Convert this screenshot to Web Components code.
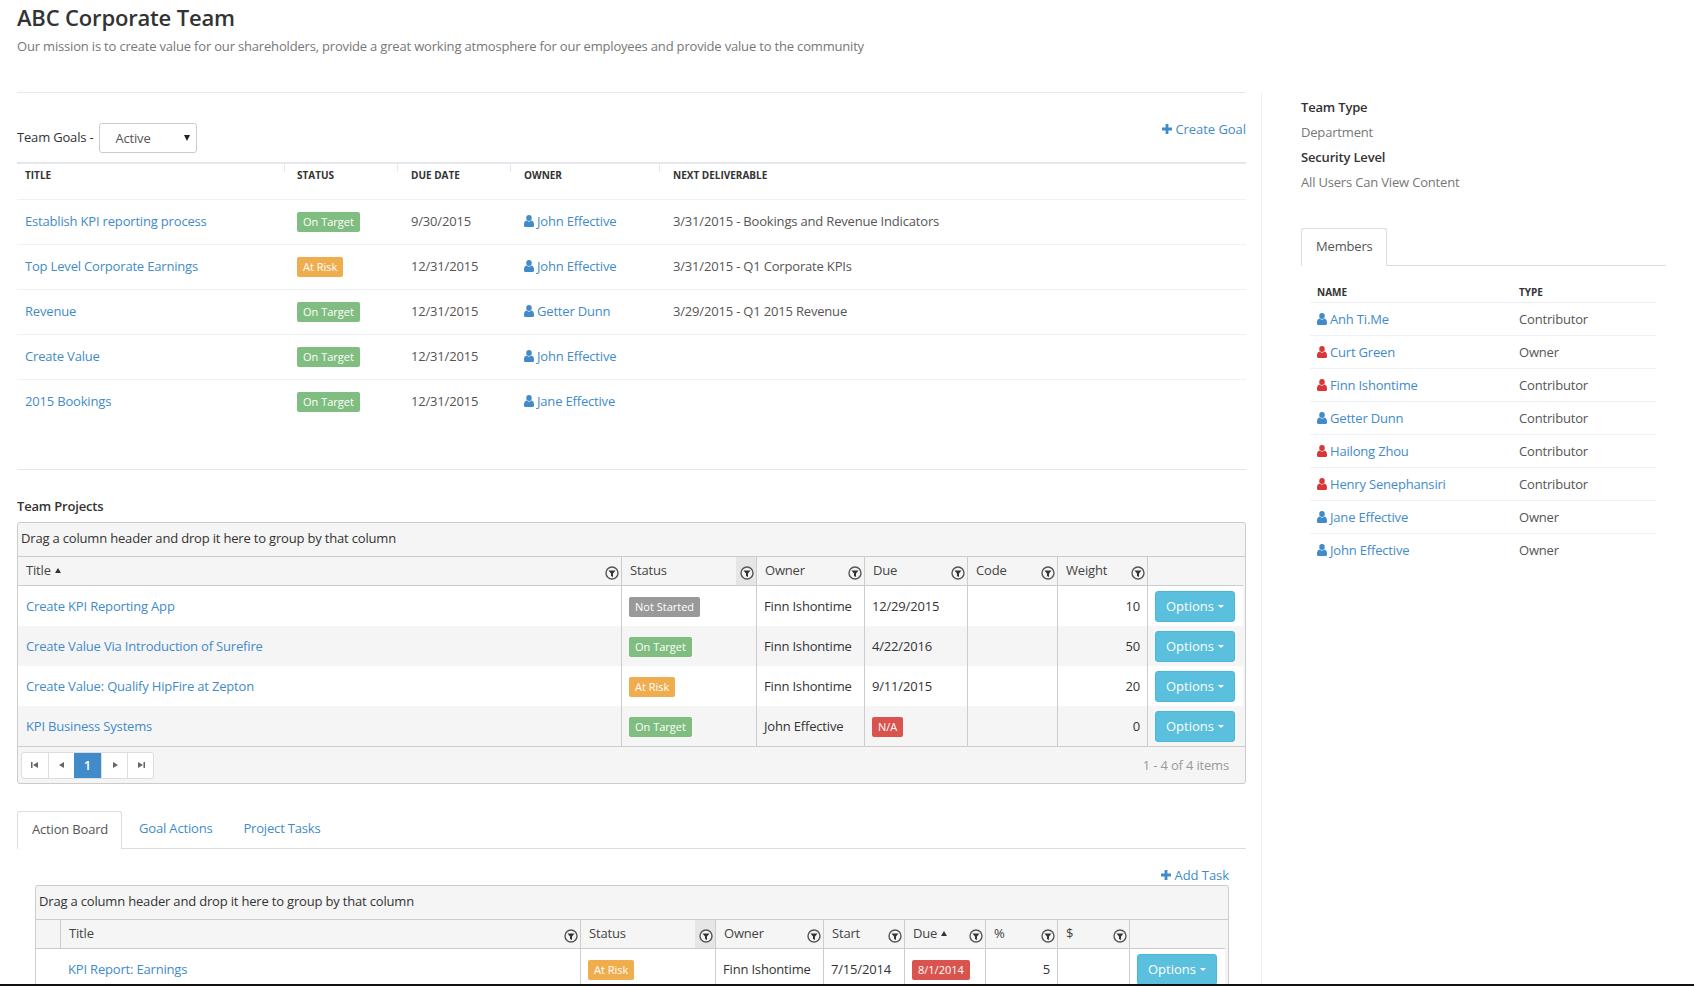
<!doctype html>
<html>
<head>
<meta charset="utf-8">
<style>
    html, body { margin: 0; padding: 0; height: 986px; overflow: hidden; background: #fff; }
    body { font: 13px/20px "Open Sans", sans-serif; color: #555; letter-spacing: -0.18px; }
</style>
</head>
<body>
<team-page></team-page>

<script>
const LINK = "#428bca"

class UserIcon extends HTMLElement
{
    connectedCallback() {
        const color = this.getAttribute("color") || LINK
        this.attachShadow({ mode: "open" }).innerHTML = `
            <style>
                :host { display: inline-block; width: 10px; height: 12px; margin-right: 3px; vertical-align: -1px }
                svg   { display: block }
            </style>
            <svg width="10" height="12" viewBox="0 0 10 12"><path fill="${color}" d="M5 0a2.7 2.7 0 0 1 2.7 2.9A2.8 2.8 0 0 1 5 6a2.8 2.8 0 0 1-2.7-3.100A2.7 2.700 0 0 1 5 0zM2.600 5.600C3.300 6.300 4.100 6.700 5 6.700s1.700-.4 2.400-1.100C9 5.900 10 7.300 10 9.500v1.300c0 .7-.5 1.200-1.200 1.200H1.200C.5 12 0 11.500 0 10.800V9.500c0-2.200 1-3.600 2.600-3.900z"/></svg>
        `
    }
}
customElements.define("user-icon", UserIcon)

class PlusIcon extends HTMLElement
{
    connectedCallback() {
        this.attachShadow({ mode: "open" }).innerHTML = `
            <style>:host { display: inline-block; width: 10px; height: 10px; margin-right: 3px } svg { display: block }</style>
            <svg width="10" height="10" viewBox="0 0 10 10"><path fill="${LINK}" d="M3.600 0h2.800v3.600H10v2.800H6.400V10H3.600V6.400H0V3.600h3.600z"/></svg>
        `
    }
}
customElements.define("plus-icon", PlusIcon)

class FilterIcon extends HTMLElement
{
    connectedCallback() {
        this.attachShadow({ mode: "open" }).innerHTML = `
            <style>:host { display: block; width: 14px; height: 14px } svg { display: block }</style>
            <svg width="14" height="14" viewBox="0 0 14 14">
                <circle cx="7" cy="7" r="6" fill="#f5f5f5" stroke="#555" stroke-width="1.400"/>
                <path fill="#333" d="M3.500 4.500h7L8 7.500V11L6 10V7.500z"/>
            </svg>
        `
    }
}
customElements.define("filter-icon", FilterIcon)

class StatusLabel extends HTMLElement
{
    connectedCallback() {
        this.attachShadow({ mode: "open" }).innerHTML = `
            <style>
                :host          { display: inline-block; height: 20px; padding: 0 6px; border-radius: 2px; box-sizing: border-box; letter-spacing: 0;
                                 font-size: 11px; line-height: 20px; color: #fff; vertical-align: middle; background: #999 }
                :host([kind=ok])   { background: #80bd80 }
                :host([kind=risk]) { background: #f0ad4e }
                :host([kind=late]) { background: #d9534f }
            </style>
            <slot></slot>
        `
    }
}
customElements.define("status-label", StatusLabel)

class OptionsButton extends HTMLElement
{
    connectedCallback() {
        this.attachShadow({ mode: "open" }).innerHTML = `
            <style>
                :host  { display: inline-flex; align-items: center; justify-content: center; width: 80px; height: 31px; box-sizing: border-box; letter-spacing: 0;
                         background: #5bc0de; border: 1px solid #46b8da; border-radius: 3px; color: #fff; vertical-align: middle }
                .caret { margin-left: 4px; border-top: 3px solid #fff; border-left: 3px solid transparent; border-right: 3px solid transparent }
            </style>
            Options <span class=caret></span>
        `
    }
}
customElements.define("options-button", OptionsButton)

class TabStrip extends HTMLElement
{
    connectedCallback() {
        const tabs = this.getAttribute("tabs").split("|")
        this.attachShadow({ mode: "open" }).innerHTML = `
            <style>
                :host  { display: flex; height: 37px; border-bottom: 1px solid #ddd; box-sizing: content-box }
                .tab   { height: 37px; padding: 0 14px 0 15px; margin-right: 2px; line-height: 35px; box-sizing: border-box; color: ${LINK} }
                .tab:first-of-type { color: #555; background: #fff; border: 1px solid #ddd; border-bottom: 0; border-radius: 3px 3px 0 0; padding: 0 13px 0 14px; height: 38px }
            </style>
            ${tabs.map(t => `<div class=tab>${t}</div>`).join("")}
        `
    }
}
customElements.define("tab-strip", TabStrip)

class GoalTable extends HTMLElement
{
    connectedCallback() {
        const rows = [
            ["Establish KPI reporting process", "ok", "On Target", "9/30/2015", "John Effective", "3/31/2015 - Bookings and Revenue Indicators"],
            ["Top Level Corporate Earnings", "risk", "At Risk", "12/31/2015", "John Effective", "3/31/2015 - Q1 Corporate KPIs"],
            ["Revenue", "ok", "On Target", "12/31/2015", "Getter Dunn", "3/29/2015 - Q1 2015 Revenue"],
            ["Create Value", "ok", "On Target", "12/31/2015", "John Effective", ""],
            ["2015 Bookings", "ok", "On Target", "12/31/2015", "Jane Effective", ""],
        ]
        this.attachShadow({ mode: "open" }).innerHTML = `
            <style>
                :host  { display: block }
                .row   { display: grid; grid-template-columns: 267px 113px 113px 149px 1fr; height: 45px; align-items: center; border-top: 1px solid #eef1f5; box-sizing: border-box; padding-bottom: 2px }
                .head  { height: 37px; border-top: 2px solid #e4e8ec; align-items: start; font-size: 10px; font-weight: 700; color: #333; line-height: 22px; letter-spacing: 0; padding: 0 }
                .head > div { padding: 0 0 0 13px; height: 8px; border-left: 1px solid #e4e8ec }
                .head > div:first-child { border-left: 0; padding-left: 8px }
                .head > div:nth-child(2) { padding-left: 12px }
                .cell  { padding-left: 14px }
                .cell:first-child { padding-left: 8px }
                .cell:nth-child(2) { padding-left: 13px }
                a      { color: ${LINK} }
            </style>
            <div class="row head">
                <div>TITLE</div><div>STATUS</div><div>DUE DATE</div><div>OWNER</div><div>NEXT DELIVERABLE</div>
            </div>
            ${rows.map(r => `
                <div class=row>
                    <div class=cell><a>${r[0]}</a></div>
                    <div class=cell><status-label kind=${r[1]}>${r[2]}</status-label></div>
                    <div class=cell>${r[3]}</div>
                    <div class=cell><a><user-icon></user-icon>${r[4]}</a></div>
                    <div class=cell>${r[5]}</div>
                </div>`).join("")}
        `
    }
}
customElements.define("goal-table", GoalTable)

// columns: [label, width, {sorted, active, filter}]
class DataGrid extends HTMLElement
{
    set config(cfg) { this._cfg = cfg; this.render() }

    render() {
        const { cols, rows, footer } = this._cfg
        const shadow = this.shadowRoot || this.attachShadow({ mode: "open" })
        shadow.innerHTML = `
            <style>
                :host      { display: block; background: #f5f5f5; border: 1px solid #ccc; border-radius: 3px; color: #333; box-sizing: border-box }
                .group     { height: 33px; line-height: 31px; padding-left: 3px; border-bottom: 1px solid #ccc }
                table      { border-collapse: separate; border-spacing: 0; table-layout: fixed; background: #fff }
                th         { height: 29px; padding: 0; box-sizing: border-box; background: #f5f5f5; font-weight: 400; text-align: left; position: relative;
                             border-bottom: 1px solid #ccc; border-left: 1px solid #ccc; padding-left: 8px; line-height: 27px; vertical-align: top; color: #444 }
                th:first-child, td:first-child { border-left: 0 }
                td         { height: 40px; padding: 0 7px; box-sizing: border-box; border-left: 1px solid #ccc; white-space: nowrap }
                td:first-child { padding-left: 8px }
                td.bare    { border-left: 0; padding-left: 8px }
                tr:nth-child(even) td { background: #f5f5f5 }
                td.num     { text-align: right }
                .flt       { position: absolute; right: 2px; top: 9px }
                .flt.on    { right: 0; top: 0; bottom: 0; width: 20px; background: #e6e6e6 }
                .flt.on filter-icon { margin: 9px 0 0 4px }
                .arrow     { display: inline-block; margin-left: 4px; vertical-align: 2px; border-bottom: 5px solid #333; border-left: 3px solid transparent; border-right: 3px solid transparent }
                a          { color: ${LINK} }
                .foot      { display: flex; align-items: center; justify-content: space-between; height: 37px; border-top: 1px solid #ccc; padding: 0 16px 0 3px; box-sizing: border-box }
                .pager     { display: flex; height: 27px; border: 1px solid #ddd; border-radius: 3px; background: #fff; box-sizing: border-box }
                .pager div { width: 26px; display: flex; align-items: center; justify-content: center; border-left: 1px solid #ddd; box-sizing: border-box; font-weight: 600 }
                .pager div:first-child { border-left: 0 }
                .pager .cur { background: #428bca; color: #fff; border: 0; width: 27px }
                .pager svg { display: block }
                .items     { color: #999 }
            </style>
            <div class=group>Drag a column header and drop it here to group by that column</div>
            <table style="width:${cols.reduce((s, c) => s + c.w, 0)}px">
                <colgroup>${cols.map(c => `<col style="width:${c.w}px">`).join("")}</colgroup>
                <thead><tr>${cols.map(c => `<th>${c.label || ""}${c.sorted ? "<span class=arrow></span>" : ""}${c.filter === false ? "" : `<span class="flt ${c.active ? "on" : ""}"><filter-icon></filter-icon></span>`}</th>`).join("")}</tr></thead>
                <tbody>${rows.map(r => `<tr>${r.map((v, i) => `<td class="${cols[i].num ? "num" : ""} ${cols[i].bare ? "bare" : ""}">${v}</td>`).join("")}</tr>`).join("")}</tbody>
            </table>
            ${footer ? `
            <div class=foot>
                <div class=pager>
                    <div><svg width="8" height="8"><path fill="#666" d="M0 1h1.500v6H0zM7 1v6L2 4z"/></svg></div>
                    <div><svg width="6" height="8"><path fill="#666" d="M5 1v6L0 4z"/></svg></div>
                    <div class=cur>1</div>
                    <div><svg width="6" height="8"><path fill="#666" d="M1 1v6l5-3z"/></svg></div>
                    <div><svg width="8" height="8"><path fill="#666" d="M6.500 1H8v6H6.500zM1 1v6l5-3z"/></svg></div>
                </div>
                <span class=items>1 - 4 of 4 items</span>
            </div>` : ""}
        `
    }
}
customElements.define("data-grid", DataGrid)

class MemberTable extends HTMLElement
{
    connectedCallback() {
        const rows = [
            ["Anh Ti.Me", LINK, "Contributor"], ["Curt Green", "#d9363a", "Owner"], ["Finn Ishontime", "#d9363a", "Contributor"],
            ["Getter Dunn", LINK, "Contributor"], ["Hailong Zhou", "#d9363a", "Contributor"], ["Henry Senephansiri", "#d9363a", "Contributor"],
            ["Jane Effective", LINK, "Owner"], ["John Effective", LINK, "Owner"],
        ]
        this.attachShadow({ mode: "open" }).innerHTML = `
            <style>
                :host { display: block; margin: 21px 10px 0 9px }
                .row  { display: grid; grid-template-columns: 202px 1fr; padding: 0 0 1px 7px; height: 33px; align-items: center; border-top: 1px solid #eef1f5; box-sizing: border-box }
                .head { height: 11px; padding-bottom: 0; border: 0; font-size: 10px; font-weight: 700; color: #333; align-items: start; line-height: 11px; letter-spacing: 0; margin-bottom: 4px }
                a     { color: ${LINK} }
            </style>
            <div class="row head"><div>NAME</div><div>TYPE</div></div>
            ${rows.map(r => `<div class=row><div><a><user-icon color="${r[1]}"></user-icon>${r[0]}</a></div><div>${r[2]}</div></div>`).join("")}
        `
    }
}
customElements.define("member-table", MemberTable)

class TeamPage extends HTMLElement
{
    connectedCallback() {
        const shadow = this.attachShadow({ mode: "open" })
        shadow.innerHTML = `
            <style>
                :host   { display: block; padding: 0 0 0 17px; position: relative; height: 986px; box-sizing: border-box; overflow: hidden }
                h1      { margin: 0; padding-top: 3px; height: 28px; font-size: 22px; line-height: 28px; font-weight: 600; color: #333; letter-spacing: -0.17px }
                .sub    { margin: 5px 0 0; height: 56px; color: #777 }
                .cols   { display: flex; height: 895px }
                main    { width: 1229px; flex: none; border-top: 1px solid #e4e8ec; box-sizing: border-box }
                aside   { width: 365px; margin-left: 15px; padding: 3px 0 0 39px; border-left: 1px solid #eee; flex: none; box-sizing: content-box }
                .bar    { display: flex; justify-content: space-between; height: 69px; box-sizing: border-box; padding-top: 30px }
                .goals  { display: flex; align-items: center; height: 30px }
                .goals b { font-weight: 400; color: #333; padding-bottom: 2px }
                .select { display: flex; width: 98px; height: 30px; margin-left: 6px; align-items: center; border: 1px solid #ccc; border-radius: 3px; box-sizing: border-box;
                          padding-left: 15px; position: relative; color: #555 }
                .select::after { content: ""; position: absolute; right: 6px; top: 11px; border-top: 6px solid #222; border-left: 3px solid transparent; border-right: 3px solid transparent }
                a       { color: ${LINK} }
                .create { margin-top: -4px; letter-spacing: -0.05px }
                hr      { margin: 45px 0 0; border: 0; border-top: 1px solid #e4e8ec }
                h2      { margin: 26px 0 6px; font-size: 13px; line-height: 20px; font-weight: 600; color: #333 }
                .tabs   { margin-top: 27px }
                .add    { display: block; text-align: right; padding: 16px 17px 0 0; line-height: 20px; height: 36px; box-sizing: border-box; letter-spacing: -0.05px }
                .inner  { margin: 0 17px 0 18px }
                dt      { font-weight: 600; color: #333; line-height: 25px }
                dd      { margin: 0; color: #777; line-height: 25px }
                dl      { margin: 0 0 33px }
                .edge   { position: absolute; left: 0; right: 0; bottom: 0; height: 2px; background: #111 }
            </style>
            <h1>ABC Corporate Team</h1>
            <p class=sub>Our mission is to create value for our shareholders, provide a great working atmosphere for our employees and provide value to the community</p>
            <div class=cols>
                <main>
                    <div class=bar>
                        <div class=goals><b>Team Goals -</b><span class=select>Active</span></div>
                        <a class=create><plus-icon></plus-icon>Create Goal</a>
                    </div>
                    <goal-table></goal-table>
                    <hr>
                    <h2>Team Projects</h2>
                    <data-grid id=projects></data-grid>
                    <tab-strip class=tabs tabs="Action Board|Goal Actions|Project Tasks"></tab-strip>
                    <a class=add><plus-icon></plus-icon>Add Task</a>
                    <div class=inner><data-grid id=tasks></data-grid></div>
                </main>
                <aside>
                    <dl>
                        <dt>Team Type</dt><dd>Department</dd>
                        <dt>Security Level</dt><dd>All Users Can View Content</dd>
                    </dl>
                    <tab-strip tabs="Members"></tab-strip>
                    <member-table></member-table>
                </aside>
            </div>
            <div class=edge></div>
        `
        const badge = (k, t) => `<status-label kind="${k}">${t}</status-label>`
        const link = t => `<a>${t}</a>`
        const opt = "<options-button></options-button>"

        shadow.getElementById("projects").config = {
            footer: true,
            cols: [
                { label: "Title", w: 603, sorted: true }, { label: "Status", w: 135, active: true }, { label: "Owner", w: 108 },
                { label: "Due", w: 103 }, { label: "Code", w: 90 }, { label: "Weight", w: 90, num: true },
                { label: "", w: 96, filter: false },
            ],
            rows: [
                [link("Create KPI Reporting App"), badge("", "Not Started"), "Finn Ishontime", "12/29/2015", "", "10", opt],
                [link("Create Value Via Introduction of Surefire"), badge("ok", "On Target"), "Finn Ishontime", "4/22/2016", "", "50", opt],
                [link("Create Value: Qualify HipFire at Zepton"), badge("risk", "At Risk"), "Finn Ishontime", "9/11/2015", "", "20", opt],
                [link("KPI Business Systems"), badge("ok", "On Target"), "John Effective", badge("late", "N/A"), "", "0", opt],
            ],
        }
        shadow.getElementById("tasks").config = {
            cols: [
                { label: "", w: 24, filter: false }, { label: "Title", w: 520, bare: true }, { label: "Status", w: 135, active: true }, { label: "Owner", w: 108 },
                { label: "Start", w: 81 }, { label: "Due", w: 81, sorted: true }, { label: "%", w: 72, num: true }, { label: "$", w: 72, num: true },
                { label: "", w: 96, filter: false },
            ],
            rows: [
                ["", link("KPI Report: Earnings"), badge("risk", "At Risk"), "Finn Ishontime", "7/15/2014", badge("late", "8/1/2014"), "5", "", opt],
            ],
        }
    }
}
customElements.define("team-page", TeamPage)
</script>
</body>
</html>
